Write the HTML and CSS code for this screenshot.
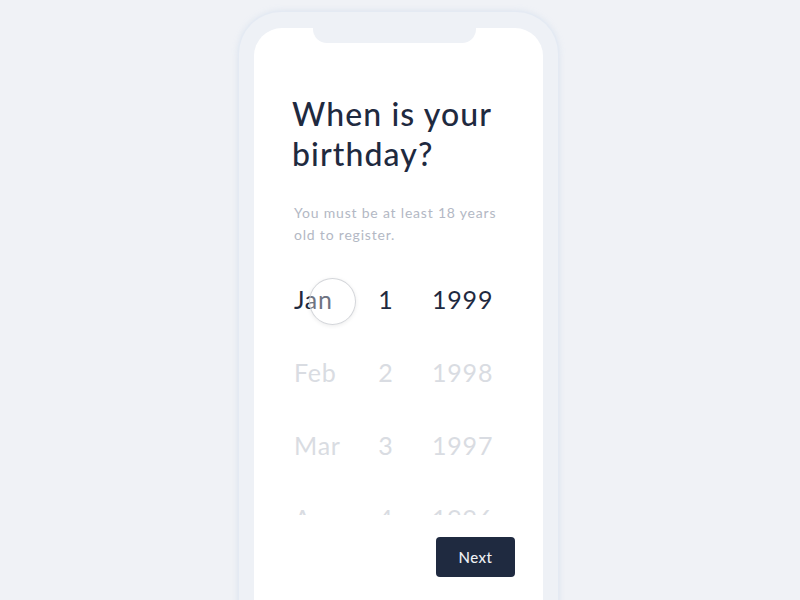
FILE: index.html
```html
<!DOCTYPE html>
<html lang="en">
<head>
<meta charset="utf-8">
<title>Birthday</title>
<link rel="stylesheet" href="styles.css">
</head>
<body>
<div class="stage">
  <div class="phone">
    <div class="screen">
      <div class="notch"></div>
      <div class="content">
        <h1 class="title">When is your<br>birthday?</h1>
        <p class="subtitle">You must be at least 18 years<br>old to register.</p>
      </div>
      <div class="picker">
        <div class="touch"></div>
        <div class="row selected"><span class="m">Jan</span><span class="d">1</span><span class="y">1999</span></div>
        <div class="row"><span class="m">Feb</span><span class="d">2</span><span class="y">1998</span></div>
        <div class="row"><span class="m">Mar</span><span class="d">3</span><span class="y">1997</span></div>
        <div class="row"><span class="m">Apr</span><span class="d">4</span><span class="y">1996</span></div>
      </div>
      <div class="actions">
        <button class="next">Next</button>
      </div>
    </div>
  </div>
</div>
</body>
</html>
```

FILE: styles.css
```css
html, body {
  margin: 0;
  padding: 0;
  height: 100%;
  overflow: hidden;
}
body {
  background: #f0f2f6;
  font-family: "Lato", "Open Sans", sans-serif;
}
.stage {
  display: flex;
  justify-content: center;
  padding-top: 12px;
}
.phone {
  width: 289px;
  height: 640px;
  padding: 16px 15px 0;
  background: #eef1f6;
  border-radius: 42px 42px 0 0;
  box-shadow: 0 0 0 1px #e4eaf3, 0 0 7px rgba(170, 195, 225, 0.4);
  margin-right: 3px;
}
.screen {
  position: relative;
  height: 100%;
  background: #ffffff;
  border-radius: 28px 28px 0 0;
}
.notch {
  position: absolute;
  top: 0;
  left: 59px;
  width: 163px;
  height: 15px;
  background: #eef1f6;
  border-radius: 0 0 14px 14px;
}
.content {
  padding: 66px 20px 0 38px;
}
.title {
  margin: 0;
  font-size: 32px;
  line-height: 40px;
  font-weight: 500;
  color: #1f2a3f;
  letter-spacing: 1.1px;
}
.subtitle {
  margin: 28px 0 0 2px;
  font-size: 14px;
  line-height: 22px;
  color: #b3b8c4;
  letter-spacing: 0.8px;
}
.picker {
  position: relative;
  margin-top: 17px;
  height: 252px;
  overflow: hidden;
  padding-left: 40px;
}
.row {
  display: grid;
  grid-template-columns: 72px 40px 1fr;
  height: 73px;
  line-height: 73px;
  font-size: 25px;
  color: #d9dce2;
  letter-spacing: 0.8px;
}
.row.selected {
  color: #1f2a3f;
}
.row .d {
  text-align: center;
}
.row .y {
  padding-left: 26px;
}
.touch {
  position: absolute;
  left: 55px;
  top: 15px;
  width: 45px;
  height: 45px;
  border-radius: 50%;
  background: rgba(255, 255, 255, 0.35);
  border: 1.5px solid rgba(205, 207, 212, 0.85);
  box-shadow: 0 1px 4px rgba(0, 0, 0, 0.08);
  z-index: 2;
}
.actions {
  display: flex;
  justify-content: flex-end;
  padding: 22px 28px 0 0;
}
.next {
  width: 79px;
  height: 40px;
  border: none;
  border-radius: 4px;
  background: #1f2a40;
  color: #eef0f4;
  font-family: "Lato", "Open Sans", sans-serif;
  font-size: 15px;
  font-weight: 500;
  letter-spacing: 0.5px;
}
```
